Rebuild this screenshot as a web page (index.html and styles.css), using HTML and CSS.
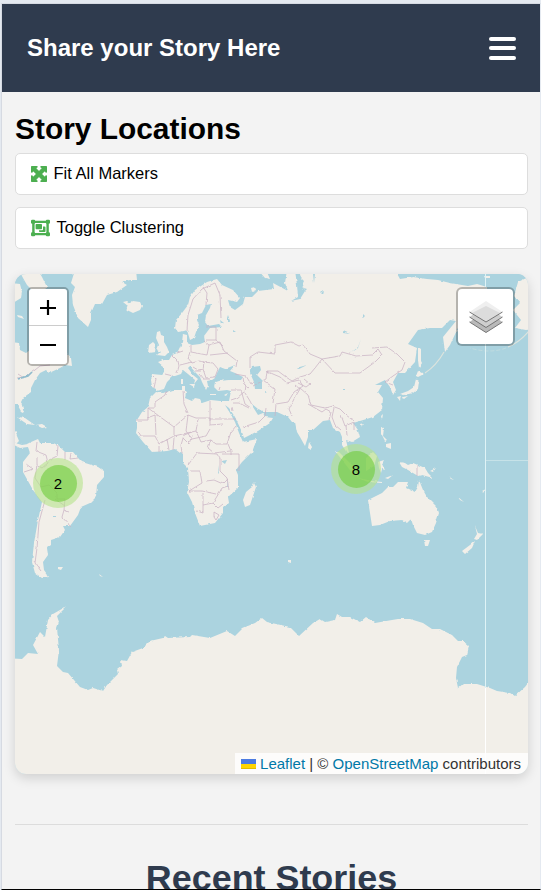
FILE: index.html
```html
<!DOCTYPE html>
<html lang="en">
<head>
<meta charset="utf-8">
<meta name="viewport" content="width=device-width, initial-scale=1">
<title>Share your Story Here</title>
<link rel="stylesheet" href="styles.css">
</head>
<body>
<div class="app">
  <header class="topbar">
    <div class="brand">Share your Story Here</div>
    <button class="menu" aria-label="Menu"><span></span><span></span><span></span></button>
  </header>
  <main class="content">
    <h1>Story Locations</h1>
    <div class="actions">
      <button class="action">
        <svg width="16" height="16" viewBox="0 0 16 16"><path fill="#4caf50" d="M1 0H5.800Q6.800 .3 6.200 1.300L5.200 2.400 8 5.200 10.800 2.400 9.800 1.300Q9.200 .3 10.200 0H15Q16 0 16 1V5.800Q15.700 6.800 14.700 6.200L13.600 5.200 10.800 8 13.600 10.800 14.700 9.800Q15.700 9.200 16 10.200V15Q16 16 15 16H10.200Q9.200 15.700 9.800 14.700L10.800 13.600 8 10.800 5.200 13.600 6.200 14.700Q6.800 15.700 5.800 16H1Q0 16 0 15V10.200Q.3 9.200 1.300 9.800L2.400 10.800 5.200 8 2.400 5.200 1.300 6.200Q.3 6.800 0 5.800V1Q0 0 1 0z" stroke="#4caf50" stroke-width=".5"/></svg>
        <span>Fit All Markers</span>
      </button>
      <button class="action">
        <svg width="19" height="18" viewBox="0 0 19 18"><g fill="#4caf50"><path fill-rule="evenodd" d="M1.200 1.800h16.600v14.400H1.200zM3.600 4v10h11.800V4z"/><rect x="0" y=".8" width="4.200" height="4" rx="1.200"/><rect x="14.800" y=".8" width="4.200" height="4" rx="1.200"/><rect x="0" y="13.200" width="4.200" height="4" rx="1.200"/><rect x="14.800" y="13.200" width="4.200" height="4" rx="1.200"/><rect x="4.600" y="5" width="6.400" height="5.200" rx=".8"/><path d="M12 7.600h1.700q.8 0 .8.800v3.900q0 .8-.8.800H8.800q-.8 0-.8-.8v-1.100h3.200q.8 0 .8-.8z"/></g></svg>
        <span>Toggle Clustering</span>
      </button>
    </div>

    <div class="map">
      <svg class="tiles" viewBox="15 274 513 500" width="513" height="500">
        <defs>
          <filter id="coast" x="15" y="274" width="513" height="500" filterUnits="userSpaceOnUse" color-interpolation-filters="sRGB">
            <feTurbulence type="fractalNoise" baseFrequency=".2" numOctaves="2" seed="4"/>
            <feDisplacementMap in="SourceGraphic" scale="2.500" xChannelSelector="R" yChannelSelector="G"/>
            <feGaussianBlur stdDeviation=".3"/>
          </filter>
        </defs>
        <rect x="15" y="274" width="513" height="500" fill="#abd3df"/>
        <g filter="url(#coast)">
          <rect x="5" y="264" width="533" height="520" fill="#abd3df"/>
          <g fill="#f2efe9">
            <!-- North America, Greenland, Iceland -->
            <path d="M10 342L19 343 20 350 26 353 30 350 30 340 40 335 60 340 66 352 71 358 72 366 65 365 60 368 49 373 46 370 40 373 35 380 31 388 31 392 23 398 21 402 24 412 22 413 17 404 10 404z"/>
            <path d="M19 270L38 270 42 277 47 287 40 295 32 290 27 285 23 278zM10 283L20 284 22 292 21 298 10 305zM17 315l5 1 2 3-6-2z"/>
            <path d="M75 270L71 283 75 287 72 295 73 305 78 318 88 327 91 320 91 313 95 304 102 304 107 295 117 292 127 285 122 282 130 280 137 280 136 270z"/>
            <path d="M123 302l4-1 3 2 3-2 7 1 2 4-2 4-7 3-6-3-2-3 3-1z"/>
            <path d="M17 417l8 1 7 5 3 2-8-1-6-4zM36 425l6-1 5 3-5 1zM10 442l5 1 7 2 6-1v3l-8 1-10-5zM10 428l5 3 4 10-3 3-6-10z"/>
            <!-- British Isles -->
            <path d="M157 332l3-1 1 4 3 1v6l3 5 2 5-4 4-8-1 3-3-3-2 2-5-3-7zM149 345l4-3 3 3-1 7-7 1z"/>
            <!-- Europe, Asia and Africa -->
            <path d="M182 313L176 320 175 328 178 332 184 331 187 330 190 340 194 338 196 332 199 325 197 320 197 315 202 313 206 305 211 304 210 308 206 315 205 322 208 326 219 324 222 327 210 328 207 332 204 336 205 342 200 344 192 345 187 343 187 335 183 334 182 342 180 347 177 353 172 355 169 360 163 360 158 362 164 367 164 373 162 375 152 374 151 380 152 387 156 389 157 391 164 389 167 382 172 377 181 374 183 370 188 374 195 380 194 384 198 379 193 375 188 368 190 366 195 372 200 377 202 382 206 390 208 386 207 381 212 380 215 378 217 373 220 367 225 369 235 365 230 371 235 373 243 377 241 380 230 380 218 381 215 382 214 387 218 391 227 390 231 391 229 401 220 401 211 400 202 403 200 399 195 398 192 401 185 398 186 392 183 390 173 390 163 393 156 392 150 398 148 407 142 412 137 420 137 428 136 433 143 442 152 452 167 451 175 449 180 453 183 454 183 463 188 468 189 482 187 492 192 502 195 513 200 526 215 523 223 513 223 508 229 503 228 497 238 488 238 475 236 470 242 462 252 452 257 439 243 442 239 433 235 422 230 413 225 405 229 408 235 417 242 432 244 438 258 431 270 423 273 418 265 417 263 413 258 415 253 407 252 404 258 409 266 412 277 412 288 417 292 422 295 422 297 432 300 437 305 446 308 437 308 430 313 430 323 421 330 420 333 428 340 432 342 437 342 445 347 453 349 453 346 440 352 442 360 437 358 430 353 423 360 421 373 417 382 410 383 398 378 392 382 385 375 385 385 380 390 387 393 395 396 390 393 382 398 373 405 373 415 362 417 348 408 344 418 330 430 328 442 328 450 320 456 321 443 337 445 352 450 345 457 330 462 318 487 300 487 287 477 284 468 286 450 283 438 280 427 279 413 277 400 279 395 270 287 270 285 283 288 291 273 283 274 289 258 291 252 297 245 297 243 304 235 310 230 307 228 300 237 302 240 298 233 290 222 285 217 279 207 282 195 290 190 297 188 305z"/>
            <path d="M258 270l7 8 5 1-4-9zM251 288l4-1 1 3-4 2z"/>
            <path d="M254 483L256 487 250 505 245 507 243 500 246 492 252 487zM309 442l3 5-1 3-3-2z"/>
            <path d="M182 386h3v7h-3zM181 379h2v5h-2zM189 384h6l-1 3zM210 394h6v1h-6zM224 395l4-2-2 3z"/>
            <!-- Pacific rim -->
            <path d="M418 347l3 2v12l1 2-3 5-1-8zM418 371l6 3-6 3-2-1zM416 379l3 2-1 8-5 4-9 2-4-1 8-3 6-4zM397 397l4-1-1 5zM403 397l5-1-4 3zM381 416l2-2-1 6zM360 424l4-1-3 4z"/>
            <path d="M381 427l3 1-1 8 4 4-2 1-4-8zM386 444l5-1v6l-5-2zM335 451l4 1 16 16 3 10-5-4zM366 458l7-6 4 4-3 10-8 5zM378 462l6-2-2 4 3 6-3-1-1 4-2-5zM358 478l14 3 10 1v1l-14-1zM385 478l8-3-5 4z"/>
            <path d="M399 462L405 463 408 465 413 463 425 468 428 473 433 478 422 475 418 476 408 470 402 467zM430 471l6-3-3 4zM441 472l4 3zM448 476l6 4-3-1zM458 497l6 5-4-2zM482 491l4-2-3 4z"/>
            <path d="M368 500L382 493 388 487 393 487 398 482 409 482 407 488 415 492 418 487 419 480 423 490 427 497 437 507 439 513 436 523 432 532 425 535 417 533 413 525 411 519 407 523 402 520 390 521 380 525 372 526 370 513zM424 540l6 0-2 6-3 0z"/>
            <path d="M475 526L478 533 483 534 477 540 474 539 477 534zM475 541L472 548 465 554 462 551 470 545zM518 282L535 274 535 329 526 330 515 328 521 320 513 310 520 303 514 296z"/>
            <path d="M484 276l5 0 1 2-5 0z"/>
            <!-- South America -->
            <path d="M27 444L31 442 38 439 40 443 53 443 58 445 65 452 73 452 78 458 82 462 98 467 104 471 104 477 97 485 96 497 90 503 81 507 78 515 70 526 63 526 65 530 60 537 51 540 51 545 47 548 48 555 43 562 44 570 49 577 42 578 35 573 32 562 34 543 38 520 42 502 33 490 23 472 23 462 30 453zM58 567l5 0-2 3-3-1zM99 574l4 3-3-1zM288 560l3 0 0 3-3-1z"/>
            <!-- Antarctica -->
            <path d="M5 658L22 659 28 653 38 654 33 645 40 632 45 637 48 620 53 614 67 606 57 616 59 622 57 628 59 650 57 666 63 672 68 673 80 687 88 690 93 688 103 691 107 685 118 674 117 670 122 666 121 660 127 661 132 652 143 648 150 641 163 638 165 636 168 638 190 637 192 635 210 638 227 631 235 636 243 628 255 623 262 618 267 622 290 627 299 636 313 623 320 619 325 622 335 620 337 614 342 617 350 617 360 622 366 617 375 623 392 620 398 619 410 619 423 623 432 629 440 629 452 635 458 641 463 641 469 646 467 655 462 657 457 667 456 678 458 688 463 684 477 684 490 688 497 691 510 693 515 696 525 687 528 683 538 683V784H5z"/>
          </g>
          <!-- Seas and lakes -->
          <g fill="#abd3df">
            <path d="M252 367l8-1 1 4-4 5 5 5v9l-7 0-1-7-4-9zM295 270l2 15 1 12-7 4 9-2 5-8-3-6 2-4-3-3-2-8zM304 288l3 1-2 2zM313 274l1 9 1-9zM228 315l2 6-2 0zM220 320l4 3-3 1zM233 330l3 2-3 0zM296 368l11-3-8 4zM351 353l7-6 3-8-3 9zM343 331l7 3-7-1zM363 314l2 2-2 2zM321 292l3-2-1 4z"/>
            <path d="M221 461l6-1-2 4zM218 465l1 9-1-1zM227 480l1 7-1-1zM343 389h2v1h-2zM53 516h3v1h-3zM265 392l2 1-2 0z"/>
          </g>
          <!-- Borders -->
          <g fill="none" stroke="#c9b3c4" stroke-width="1" stroke-opacity=".75" stroke-linejoin="round">
            <path d="M187 330L188 315 193 299 202 289 215 283 220 295 221 318M206 305L207 293 203 287M191 345L191 352 207 355 209 345 204 341M209 345L220 342 224 351 237 361 236 367M190 352l-2 6 4 5 7-2 5 1-1 7-5 1-5-3M172 355l6 6 1 5-2 7M177 353l6-2M180 365l12-3M203 362l10 1 5 6-3 8-9 1-3-9M199 374l4 5 7 0M206 327h10v13h-10M216 340l7 6M210 355l18-2M153 376l3 3-2 9M165 374l8 2M195 371l6 0"/>
            <path d="M250 368L250 357 258 352 275 354 275 345 291 342 299 346 303 345 310 354 322 359 315 368 310 374 300 377 292 381 286 377 278 371 267 371 266 379 253 386M322 359L340 356 342 352 356 356 372 355 378 349 382 355 375 362 360 373 335 373 322 359M372 348L387 347 397 354 405 362 402 370 393 376M266 371l14 6 7 6 12-3 4 6-9 6-6 10-12 2-1 12M263 380l12 9-2 14M304 379l6 5-4 3-8-4M295 385l5 4-6 10-5 10 3 7M300 388l8 7 3 10 14 3 7-2 8 3 6 6 8 6M308 404l14 8 4-3 5 3-2 8M334 408l-2 9 3 8 6 5M341 415l4 11 9-4 0 8M346 426l1 9M393 376l-8 6 8 3"/>
            <path d="M235 374l11 2 5 8 3-2M243 377l1 7 5 4M246 384l-1 9 5 8 2 4M219 390l1-3M231 390l10 0 4 14 6 4M231 400l6-2 7-6M233 403l6 0 10 5M243 427l16-5 6-6 1-8M232 407l1 4"/>
            <path d="M148 408h7v-6l10-7 1-4M137 420h11v-12l26 19 14-12 8 3 14 0 0 7 13-1M183 391l1 13 4 9M210 401v20M210 419h26M174 427v9l-15 8-4-8-14 0-3-5M155 415l1 20M155 415l-8 3M174 436l22-5 2-12M188 415l-2 16 6 8 14-3 4-7M182 454l-1-9 3-10 8-3M196 431l5 11 10-2 5 4 11 0 4-12 5-6M211 440l-3 8 6 5 16-2M188 465l9-12 20 1M217 454l3 5 0 12 7 7M222 454h17l0 8 0 9M190 471l10 0 2 12-13 8h13l14 3M206 481l8-1 9 4 5-5M203 493v20l-6-2M203 505l10-2 6-10 3-5 6-2M213 503l5 5 5-4M227 478l2 12M214 512l5 3-3 5-2-3zM159 446l0 6M167 439l2 11M174 438l-1 12M228 444l3 7 0 4M183 438l6 6 3-9"/>
            <path d="M37 442l-1 9 10 4 2 8-6 5-5-3 0-8M58 446l-1 10-8 4M65 452l0 8M71 453l-1 6 8-1M26 464l7 5-9 3M37 465l-2 13 6 9 8-2 8 8 0 6 8 0-1 11 5 2M45 500l-6 22-2 26-2 15 6 8M55 499l10 7M64 510l-2 7 9 10M417 465v11M17 378l8-1 10-7 5-4 10-1M18 374l6 4"/>
          </g>
          <path d="M18 379l10-3 4-4" fill="none" stroke="#8fbccd" stroke-width="1.500"/>
        </g>
        <path d="M529 331Q520 342 508 347M425 373Q436 366 444 352" fill="none" stroke="#dce3dd" stroke-width="1.200"/>
        <path d="M506 348Q490 354 470 348" fill="none" stroke="#d5e3e0" stroke-width=".8" stroke-opacity=".6" stroke-dasharray="4 2"/>
        <path d="M485 460.500h43" fill="none" stroke="#c6e2e8" stroke-width="1"/>
        <path d="M485.500 274v500" stroke="#dff3f6" stroke-width="1"/>
        <path d="M485.500 688v86" stroke="#fff" stroke-width="1"/>
      </svg>

      <div class="cluster cluster-americas"><div>2</div></div>
      <div class="cluster cluster-asia"><div>8</div></div>

      <div class="zoom">
        <button aria-label="Zoom in"><svg width="16" height="16" viewBox="0 0 16 16"><path d="M0 9h16M8 1v15" stroke="#000" stroke-width="2.200"/></svg></button>
        <button aria-label="Zoom out"><svg width="16" height="16" viewBox="0 0 16 16"><path d="M0 8h16" stroke="#000" stroke-width="2"/></svg></button>
      </div>
      <button class="layers" aria-label="Layers">
        <svg width="34" height="34" viewBox="0 0 34 34">
          <path d="M.5 22L17 11 33.500 22 17 32.500z" fill="#b9b9b9"/><path d="M.5 22L17 32.500 33.500 22" fill="none" stroke="#747474"/>
          <path d="M.5 17L17 6 33.500 17 17 27.500z" fill="#cecece"/><path d="M.5 17L17 27.500 33.500 17" fill="none" stroke="#747474"/>
          <path d="M.5 12L17 1 33.500 12 17 22z" fill="#efefef"/><path d="M6 11.500L17 6 28 11.500 31 13 17 22 3 13z" fill="#dcdcdc"/><path d="M.5 12L17 22 33.500 12" fill="none" stroke="#747474"/>
        </svg>
      </button>
      <div class="attribution"><svg width="15" height="10" viewBox="0 0 15 10"><path fill="#4c7be1" d="M0 0h15v5H0z"/><path fill="#ffd500" d="M0 5h15v4H0z"/><path fill="#e0bc00" d="M0 9h15v1H0z"/></svg> <a>Leaflet</a> | © <a>OpenStreetMap</a> contributors</div>
    </div>

    <section class="recent"><h2>Recent Stories</h2></section>
  </main>
</div>
</body>
</html>
```
FILE: styles.css
```css
* { box-sizing: border-box; }
html, body { margin: 0; height: 890px; overflow: hidden; }
body {
  background: #e4e9f0;
  font-family: "Liberation Sans", Arial, sans-serif;
  padding: 3px 0 0 1px;
}
button { font: inherit; color: #000; padding: 0; margin: 0; }
.app {
  height: 887px;
  overflow: hidden;
  background: #f3f3f3;
  border: 1px solid #d6dae2;
  border-right-color: #e4e9f0;
  border-bottom-color: #000;
}
.topbar {
  height: 88px;
  padding: 0 24px 0 25px;
  background: #2f3b4e;
  color: #fff;
  display: flex;
  align-items: center;
  justify-content: space-between;
}
.brand { font-size: 24px; font-weight: bold; line-height: 28px; }
.menu {
  width: 27px;
  border: 0;
  background: none;
  display: flex;
  flex-direction: column;
  gap: 5.500px;
}
.menu span { height: 4px; border-radius: 2px; background: #fff; }
.content { padding: 19px 12px 0 13px; }
h1 { margin: 0 0 6px; font-size: 29.900px; line-height: 36px; }
.actions { display: flex; flex-direction: column; gap: 12px; }
.action {
  height: 42px;
  padding: 0 15px 1px;
  border: 1px solid #ddd;
  border-radius: 5px;
  background: #fff;
  display: flex;
  align-items: center;
  gap: 6.500px;
  font-size: 16.500px;
}
.map {
  position: relative;
  height: 500px;
  margin-top: 25px;
  border-radius: 11px;
  overflow: hidden;
  box-shadow: 0 4px 12px rgba(0, 0, 0, .15);
}
.tiles { display: block; }
.cluster {
  position: absolute;
  width: 50px;
  height: 50px;
  border-radius: 50%;
  background: rgba(181, 226, 140, .6);
  display: grid;
  place-items: center;
  font-size: 15px;
}
.cluster div {
  width: 37px;
  height: 37px;
  border-radius: 50%;
  background: rgba(110, 204, 57, .6);
  display: grid;
  place-items: center;
}
.cluster-americas { left: 18px; top: 184px; }
.cluster-asia { left: 316px; top: 170px; }
.zoom {
  position: absolute;
  left: 12px;
  top: 13px;
  width: 42px;
  border: 2px solid rgba(0, 0, 0, .25);
  border-radius: 5px;
  background-clip: padding-box;
}
.zoom button {
  width: 38px;
  height: 38px;
  border: 0;
  background: #fff;
  display: grid;
  place-items: center;
}
.zoom button:first-child { height: 37px; border-bottom: 1px solid #ccc; border-radius: 3px 3px 0 0; }
.zoom button:last-child { border-radius: 0 0 3px 3px; }
.layers {
  position: absolute;
  right: 13px;
  top: 13px;
  width: 59px;
  height: 59px;
  border: 2px solid rgba(0, 0, 0, .25);
  border-radius: 6px;
  background: #fff;
  background-clip: padding-box;
  display: grid;
  place-items: center;
}
.attribution {
  position: absolute;
  right: 0;
  bottom: 0;
  height: 21px;
  padding: 0 7px 0 6px;
  background: rgba(255, 255, 255, .8);
  color: #333;
  font-size: 15px;
  line-height: 21px;
  white-space: nowrap;
}
.attribution a { color: #0078a8; }
.recent { margin-top: 50px; border-top: 1px solid #dcdcdc; padding-top: 33px; }
h2 {
  margin: 0;
  color: #2f3b4e;
  text-align: center;
  font-size: 35.900px;
  line-height: 41px;
}
```
